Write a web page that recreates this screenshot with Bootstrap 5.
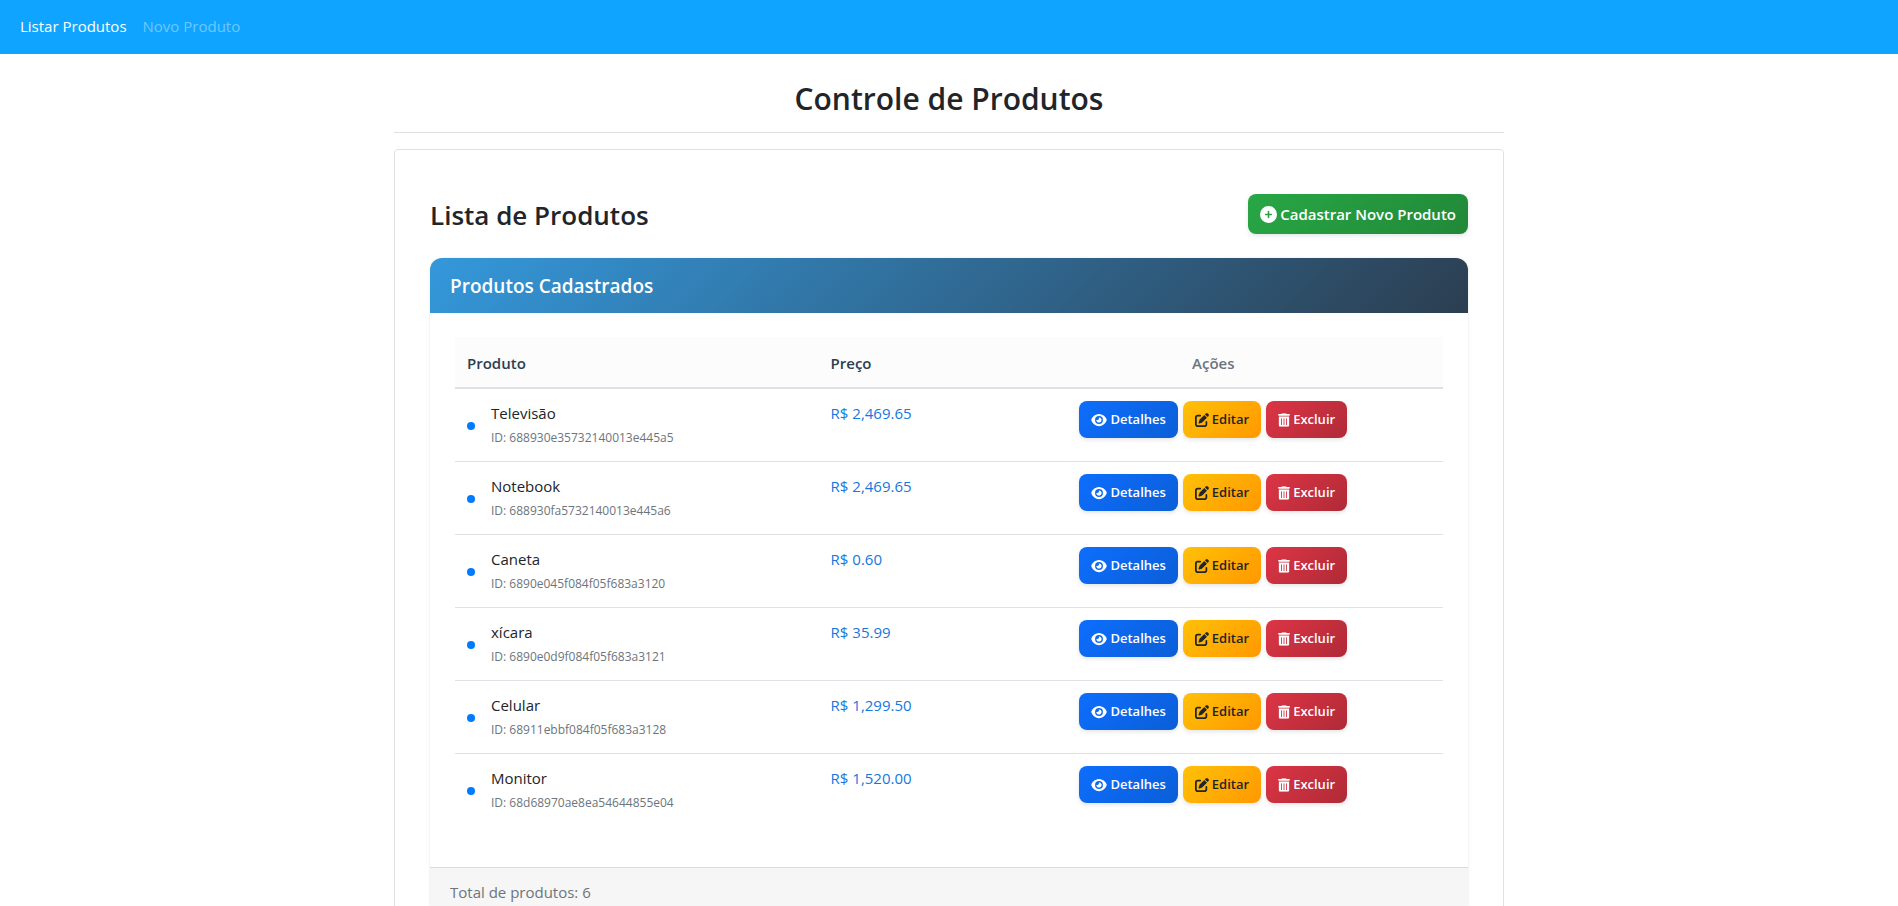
<!DOCTYPE html>
<html lang="pt-BR">
<head>
<meta charset="utf-8">
<meta name="viewport" content="width=device-width, initial-scale=1">
<title>Controle de Produtos</title>
<link href="https://cdn.jsdelivr.net/npm/bootstrap@5.3.0/dist/css/bootstrap.min.css" rel="stylesheet">
<style>
  body { font-family: "Segoe UI", "Open Sans", "Noto Sans", sans-serif; font-size: 15px; line-height: 24px; color: #212529; background: #fff; }
  .top-bar { background: #0fa4ff; padding: 7px 12px 8px; }
  .top-bar .nav-link { padding: 8px; line-height: 23px; color: rgba(255,255,255,.4); }
  .top-bar .nav-link.active { color: #fff; }
  .page-wrap { max-width: 1140px; padding: 0 15px; }
  .page-title { font-size: 30px; line-height: 38px; font-weight: 600; margin: 26px 0 14px; }
  .page-rule { margin: 0 0 16px; border-top: 1px solid #dee2e6; opacity: 1; }
  .outer-card { border: 1px solid #dee2e6; border-radius: 4px; padding: 44px 35px 35px; }
  .list-title { font-size: 26px; line-height: 34px; font-weight: 600; margin: 4px 0 0; }
  .btn-grad { border: 0; border-radius: 8px; font-weight: 600; font-size: 13px; line-height: 21px; padding: 8px 12px; color: #fff; box-shadow: 0 2px 4px rgba(0,0,0,.1); display: inline-flex; align-items: center; gap: 3px; }
  .btn-grad svg { display: block; fill: currentColor; height: 14px; }
  .btn-add { font-size: 15px; line-height: 24px; background: linear-gradient(135deg, #28a745, #218838); }
  .btn-add svg { height: 17px; }
  .btn-see { background: linear-gradient(135deg, #0d6efd, #0b5ed7); }
  .btn-edit { background: linear-gradient(135deg, #ffc107, #ff9800); color: #212529; }
  .btn-drop { background: linear-gradient(135deg, #dc3545, #b02a37); }
  .btn-grad:hover { filter: brightness(.95); color: #fff; }
  .inner-card { border: 0; border-radius: 12px; box-shadow: 0 0 3px rgba(0,0,0,.1); overflow: hidden; }
  .inner-head { background: linear-gradient(135deg, #3498db, #2c3e50); border: 0; color: #fff; padding: 16px 20px 15px; }
  .inner-head h5 { font-size: 19px; line-height: 24px; font-weight: 600; }
  .inner-body { padding: 24px 25px; }
  .prod-table { table-layout: fixed; margin-bottom: 16px; border-collapse: separate; border-spacing: 0; }
  .prod-table .c-name { width: 36.8%; }
  .prod-table .c-price { width: 16.7%; }
  .prod-table th { background: #fcfcfd; color: #2c3e50; font-weight: 600; padding: 14px 12px 12px; border-bottom: 2px solid #dee2e6; }
  .prod-table th.th-act { color: #6c757d; }
  .prod-table td { padding: 12px 12px 11px; height: 73px; border-bottom: 1px solid #dee2e6; vertical-align: top; }
  .prod-table tbody tr:last-child td { border-bottom: 0; }
  .dot { width: 8px; height: 8px; border-radius: 50%; background: #007bff; flex: none; }
  .prod-id { font-size: 12px; padding-top: 1px; color: #6c757d; }
  .prod-table td.price { color: #1577e0; }
  .btn-set { gap: 5px; }
  .inner-foot { background: #f6f6f6; border-top: 1px solid #d9dcde; padding: 12px 20px; color: #6c757d; }
</style>
</head>
<body>
<svg width="0" height="0" class="d-none" aria-hidden="true">
  <symbol id="i-plus" viewBox="0 0 512 512"><path d="M256 512a256 256 0 1 0 0-512 256 256 0 1 0 0 512zM232 344v-64h-64c-13.300 0-24-10.700-24-24s10.700-24 24-24h64v-64c0-13.300 10.700-24 24-24s24 10.700 24 24v64h64c13.300 0 24 10.700 24 24s-10.700 24-24 24h-64v64c0 13.300-10.700 24-24 24s-24-10.700-24-24z"/></symbol>
  <symbol id="i-eye" viewBox="0 0 576 512"><path d="M288 32c-80.800 0-145.500 36.800-192.600 80.600C48.600 156 17.300 208 2.500 243.700c-3.300 7.900-3.300 16.700 0 24.600C17.300 304 48.600 356 95.400 399.400 142.500 443.200 207.200 480 288 480s145.500-36.800 192.600-80.600c46.800-43.500 78.100-95.400 93-131.100 3.300-7.900 3.300-16.700 0-24.600-14.900-35.700-46.200-87.700-93-131.100C433.500 68.800 368.800 32 288 32zM144 256a144 144 0 1 1 288 0 144 144 0 1 1-288 0zm144-64c0 35.300-28.700 64-64 64-7.100 0-13.900-1.200-20.300-3.300-5.500-1.800-11.900 1.600-11.700 7.400.3 6.900 1.300 13.800 3.200 20.700 13.700 51.200 66.400 81.600 117.600 67.900s81.600-66.400 67.900-117.600c-11.100-41.500-47.800-69.400-88.600-71.100-5.800-.2-9.200 6.100-7.400 11.700 2.100 6.400 3.300 13.200 3.300 20.300z"/></symbol>
  <symbol id="i-pen" viewBox="0 0 512 512"><path d="M471.600 21.700c-21.900-21.900-57.300-21.900-79.200 0l-30.100 30 97.900 97.900 30.100-30.100c21.900-21.900 21.900-57.300 0-79.200l-18.700-18.600zm-299.200 220c-6.100 6.100-10.800 13.600-13.500 21.900l-29.600 88.800c-2.900 8.600-.6 18.100 5.800 24.600s15.900 8.700 24.600 5.800l88.800-29.600c8.200-2.700 15.700-7.400 21.900-13.500l167.300-167.400-98-98-167.300 167.400zM96 64c-53 0-96 43-96 96v256c0 53 43 96 96 96h256c53 0 96-43 96-96v-96c0-17.700-14.300-32-32-32s-32 14.300-32 32v96c0 17.700-14.300 32-32 32H96c-17.700 0-32-14.300-32-32V160c0-17.700 14.300-32 32-32h96c17.700 0 32-14.300 32-32s-14.300-32-32-32H96z"/></symbol>
  <symbol id="i-bin" viewBox="0 0 448 512"><path d="M135.200 17.700 128 32H32C14.300 32 0 46.300 0 64s14.300 32 32 32h384c17.700 0 32-14.300 32-32s-14.300-32-32-32h-96l-7.200-14.300C307.400 6.800 296.300 0 284.200 0H163.800c-12.100 0-23.200 6.800-28.600 17.700zM416 128H32v320c0 35.300 28.700 64 64 64h256c35.300 0 64-28.700 64-64V128zM144 208v224c0 8.800-7.200 16-16 16s-16-7.200-16-16V208c0-8.800 7.200-16 16-16s16 7.200 16 16zm96 0v224c0 8.800-7.200 16-16 16s-16-7.200-16-16V208c0-8.800 7.200-16 16-16s16 7.200 16 16zm96 0v224c0 8.800-7.200 16-16 16s-16-7.200-16-16V208c0-8.800 7.200-16 16-16s16 7.200 16 16z"/></symbol>
</svg>

<nav class="navbar navbar-expand top-bar">
  <ul class="navbar-nav">
    <li class="nav-item"><a class="nav-link active" href="#">Listar Produtos</a></li>
    <li class="nav-item"><a class="nav-link" href="#">Novo Produto</a></li>
  </ul>
</nav>

<main class="container page-wrap">
  <h1 class="page-title text-center">Controle de Produtos</h1>
  <hr class="page-rule">
  <div class="outer-card">
    <div class="d-flex justify-content-between align-items-start mb-4">
      <h2 class="list-title">Lista de Produtos</h2>
      <button type="button" class="btn btn-grad btn-add"><svg viewBox="0 0 512 512" width="17"><use href="#i-plus"/></svg>Cadastrar Novo Produto</button>
    </div>
    <section class="card inner-card">
      <div class="card-header inner-head"><h5 class="mb-0">Produtos Cadastrados</h5></div>
      <div class="card-body inner-body">
        <table class="table prod-table">
          <colgroup><col class="c-name"><col class="c-price"><col></colgroup>
          <thead><tr><th scope="col">Produto</th><th scope="col">Preço</th><th scope="col" class="th-act text-center">Ações</th></tr></thead>
          <tbody id="rows"></tbody>
        </table>
      </div>
      <div class="card-footer inner-foot">Total de produtos: 6</div>
    </section>
  </div>
</main>

<script src="https://cdn.jsdelivr.net/npm/bootstrap@5.3.0/dist/js/bootstrap.bundle.min.js"></script>
<script>
  const products = [
    ["Televisão", "688930e35732140013e445a5", "2,469.65"],
    ["Notebook", "688930fa5732140013e445a6", "2,469.65"],
    ["Caneta", "6890e045f084f05f683a3120", "0.60"],
    ["xícara", "6890e0d9f084f05f683a3121", "35.99"],
    ["Celular", "68911ebbf084f05f683a3128", "1,299.50"],
    ["Monitor", "68d68970ae8ea54644855e04", "1,520.00"]
  ];
  document.getElementById("rows").innerHTML = products.map(([name, id, price]) => `
    <tr>
      <td><div class="d-flex align-items-center"><span class="dot me-3"></span><div><div>${name}</div><div class="prod-id">ID: ${id}</div></div></div></td>
      <td class="price">R$ ${price}</td>
      <td><div class="d-flex justify-content-center btn-set">
        <button type="button" class="btn btn-grad btn-see"><svg viewBox="0 0 576 512" width="16"><use href="#i-eye"/></svg>Detalhes</button>
        <button type="button" class="btn btn-grad btn-edit"><svg viewBox="0 0 512 512" width="14"><use href="#i-pen"/></svg>Editar</button>
        <button type="button" class="btn btn-grad btn-drop"><svg viewBox="0 0 448 512" width="12"><use href="#i-bin"/></svg>Excluir</button>
      </div></td>
    </tr>`).join("");
</script>
</body>
</html>
